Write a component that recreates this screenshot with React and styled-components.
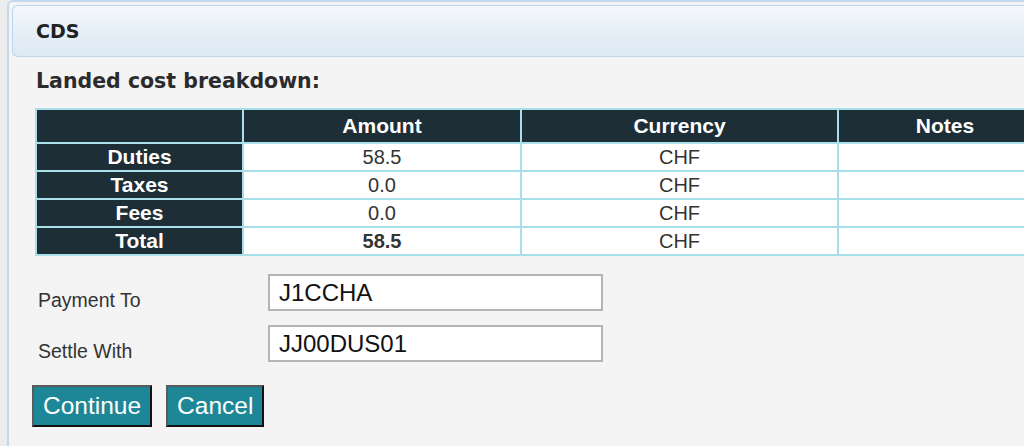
import React, { useState } from "react";
import styled, { createGlobalStyle } from "styled-components";

const GlobalStyle = createGlobalStyle`
  body {
    margin: 0;
    overflow: hidden;
    background: linear-gradient(90deg, #ececec 0%, #f7f7f7 100%);
    font-family: "Liberation Sans", Arial, sans-serif;
  }
`;

const Page = styled.div`
  padding-left: 7px;
  height: 446px;
`;

const Panel = styled.div`
  height: 100%;
  box-sizing: border-box;
  background: #f4f4f4;
  border-left: 2px solid #c2daf0;
  border-top: 2px solid #c2daf0;
  border-top-left-radius: 6px;
  padding: 3px 0 0 3px;
  overflow: hidden;
`;

const Header = styled.div`
  height: 52px;
  box-sizing: border-box;
  display: flex;
  align-items: center;
  padding-left: 23px;
  border: 1px solid #bcd4ea;
  border-right: none;
  border-radius: 6px 0 0 6px;
  background: linear-gradient(180deg, #f5f8fc 0%, #e6eef7 55%, #dde9f4 100%);
  font-family: "DejaVu Sans", Verdana, sans-serif;
  font-weight: bold;
  font-size: 19px;
  color: #222;
`;

const Content = styled.div`
  padding: 12px 0 0 23px;
`;

const Heading = styled.h2`
  margin: 0 0 15px 1px;
  font-family: "DejaVu Sans", Verdana, sans-serif;
  font-size: 20.5px;
  font-weight: bold;
  color: #2b2b2b;
  line-height: 24px;
`;

const Table = styled.table`
  border-collapse: collapse;
  width: 1018px;
  font-size: 20px;
`;

const Th = styled.th`
  height: 32px;
  padding: 0;
  background: #1e2e36;
  color: #fff;
  font-size: 21px;
  font-weight: bold;
  border: 2px solid #a9dfea;
  width: ${(p) => p.$w || "auto"};
`;

const RowHead = styled.th`
  height: 26px;
  padding: 0;
  background: #1e2e36;
  color: #fff;
  font-size: 21px;
  font-weight: bold;
  border: 2px solid #a9dfea;
`;

const Td = styled.td`
  height: 26px;
  padding: 0;
  background: #fff;
  color: #333;
  text-align: center;
  border: 2px solid #a9dfea;
  font-weight: ${(p) => (p.$bold ? "bold" : "normal")};
`;

const Form = styled.div`
  margin-top: 18px;
  display: grid;
  grid-template-columns: 233px 335px;
  row-gap: 14px;
  align-items: end;
`;

const Label = styled.label`
  padding-left: 3px;
  margin-bottom: -1px;
  font-size: 19.5px;
  color: #333;
`;

const Input = styled.input`
  height: 37px;
  box-sizing: border-box;
  border: 2px solid #b4b4b4;
  background: #fff;
  padding: 0 9px;
  font-family: "Liberation Sans", Arial, sans-serif;
  font-size: 24px;
  color: #111;
  outline: none;
`;

const Actions = styled.div`
  display: flex;
  gap: 14px;
  margin: 23px 0 0 -3px;
`;

const Button = styled.button`
  height: 42px;
  padding: 0 9px;
  background: #1e8797;
  color: #fff;
  font-family: "Liberation Sans", Arial, sans-serif;
  font-size: 24.5px;
  border: 2px solid;
  border-color: #5a5a5a #111 #111 #5a5a5a;
  cursor: pointer;
`;

const rows = [
  { label: "Duties", amount: "58.5" },
  { label: "Taxes", amount: "0.0" },
  { label: "Fees", amount: "0.0" },
  { label: "Total", amount: "58.5", bold: true },
];

const App = () => {
  const [payTo, setPayTo] = useState("J1CCHA");
  const [settle, setSettle] = useState("JJ00DUS01");

  return (
    <Page>
      <GlobalStyle />
      <Panel>
        <Header>CDS</Header>
        <Content>
          <Heading>Landed cost breakdown:</Heading>
          <Table>
            <thead>
              <tr>
                <Th $w="205px"></Th>
                <Th $w="276px">Amount</Th>
                <Th $w="315px">Currency</Th>
                <Th>Notes</Th>
              </tr>
            </thead>
            <tbody>
              {rows.map((r) => (
                <tr key={r.label}>
                  <RowHead>{r.label}</RowHead>
                  <Td $bold={r.bold}>{r.amount}</Td>
                  <Td>CHF</Td>
                  <Td></Td>
                </tr>
              ))}
            </tbody>
          </Table>
          <Form>
            <Label>Payment To</Label>
            <Input value={payTo} onChange={(e) => setPayTo(e.target.value)} />
            <Label>Settle With</Label>
            <Input value={settle} onChange={(e) => setSettle(e.target.value)} />
          </Form>
          <Actions>
            <Button>Continue</Button>
            <Button>Cancel</Button>
          </Actions>
        </Content>
      </Panel>
    </Page>
  );
};

export default App;
